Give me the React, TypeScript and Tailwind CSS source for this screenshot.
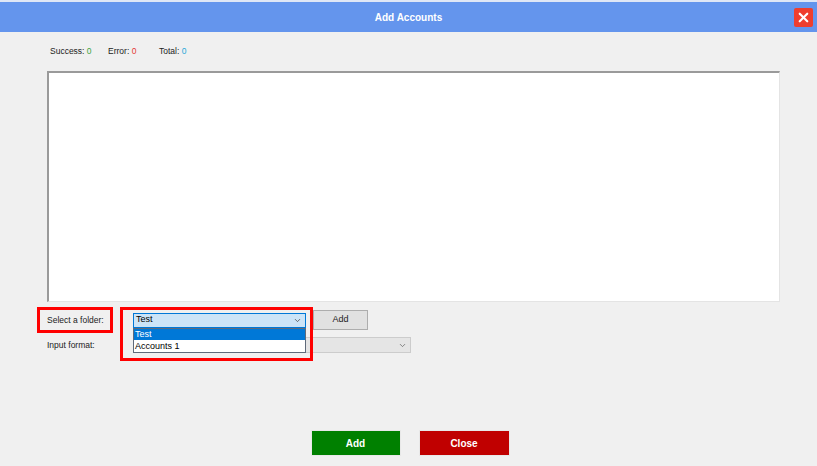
import { ChevronDown, X } from "lucide-react";

const font = { fontFamily: '"Liberation Sans", Arial, sans-serif' };

const App = () => {
  return (
    <div className="relative w-[817px] h-[466px] bg-[#f0f0f0] flex flex-col overflow-hidden" style={font}>
      {/* window top edge */}
      <div className="h-[2px] bg-[#dfe7f6]" />

      {/* TITLE BAR */}
      <div className="relative h-[30px] bg-[#6495ed] flex items-center justify-center">
        <span className="text-white font-bold text-[10px]">Add Accounts</span>
        <button className="absolute right-[4px] top-[6px] w-[19px] h-[19px] bg-[#ef3e2e] rounded-[2px] flex items-center justify-center">
          <X size={15} strokeWidth={3.5} className="text-white" />
        </button>
      </div>

      {/* STATS */}
      <div className="flex pl-[50px] pt-[13px] h-[25px] text-[8.5px] leading-[12px] text-[#222]">
        <div className="w-[58px]">
          Success: <span className="text-[#3fa33f]">0</span>
        </div>
        <div className="w-[51px]">
          Error: <span className="text-[#e53935]">0</span>
        </div>
        <div>
          Total: <span className="text-[#2aa7d8]">0</span>
        </div>
      </div>

      {/* TEXT AREA */}
      <div className="ml-[47px] mt-[14px] w-[733px] h-[231px] bg-white border-t-2 border-l-2 border-t-[#9a9a9a] border-l-[#9a9a9a] border-r border-b border-r-[#e4e4e4] border-b-[#e4e4e4]" />

      {/* SELECT FOLDER ROW */}
      <div className="flex items-center h-[20px] mt-[8px] text-[8.5px]">
        <div className="w-[133px] shrink-0 pl-[47px] text-[#222] whitespace-nowrap">Select a folder:</div>
        <div className="relative w-[173px] h-[15px] bg-[#cce4f7] border border-[#0078d7] flex items-center pl-[2px] pr-[3px] text-[9px] text-black">
          <span className="flex-1">Test</span>
          <ChevronDown size={9} className="text-[#444]" />
          {/* open dropdown list */}
          <div className="absolute left-[-1px] top-[14px] w-[173px] bg-white border border-[#5f6a7a] z-10">
            <div className="h-[11px] leading-[11px] bg-[#0078d7] text-white pl-[1px]">Test</div>
            <div className="h-[12px] leading-[12px] text-black pl-[1px]">Accounts 1</div>
          </div>
        </div>
        <button className="ml-[7px] w-[55px] h-[20px] bg-[#e1e1e1] border border-[#adadad] text-[9px] text-[#222]">
          Add
        </button>
      </div>

      {/* INPUT FORMAT ROW */}
      <div className="flex items-center h-[16px] mt-[7px] text-[8.5px]">
        <div className="w-[133px] shrink-0 pl-[47px] text-[#222] whitespace-nowrap">Input format:</div>
        <div className="w-[278px] h-[16px] bg-[#e5e5e5] border border-[#cccccc] flex items-center justify-end pr-[3px]">
          <ChevronDown size={9} className="text-[#666]" />
        </div>
      </div>

      {/* BOTTOM BUTTONS */}
      <div className="mt-auto mb-[10px] flex justify-center gap-[18px] pl-[3px]">
        <button className="w-[90px] h-[26px] bg-[#008000] text-white font-bold text-[10px] border border-[#e8e8e8]">
          Add
        </button>
        <button className="w-[91px] h-[26px] bg-[#c00000] text-white font-bold text-[10px] border border-[#e8e8e8]">
          Close
        </button>
      </div>

      {/* ANNOTATION BOXES */}
      <div className="absolute left-[37px] top-[307px] w-[76px] h-[26px] border-[3px] border-[#ff0000]" />
      <div className="absolute left-[120px] top-[307px] w-[193px] h-[54px] border-[3px] border-[#ff0000]" />
    </div>
  );
};

export default App;
